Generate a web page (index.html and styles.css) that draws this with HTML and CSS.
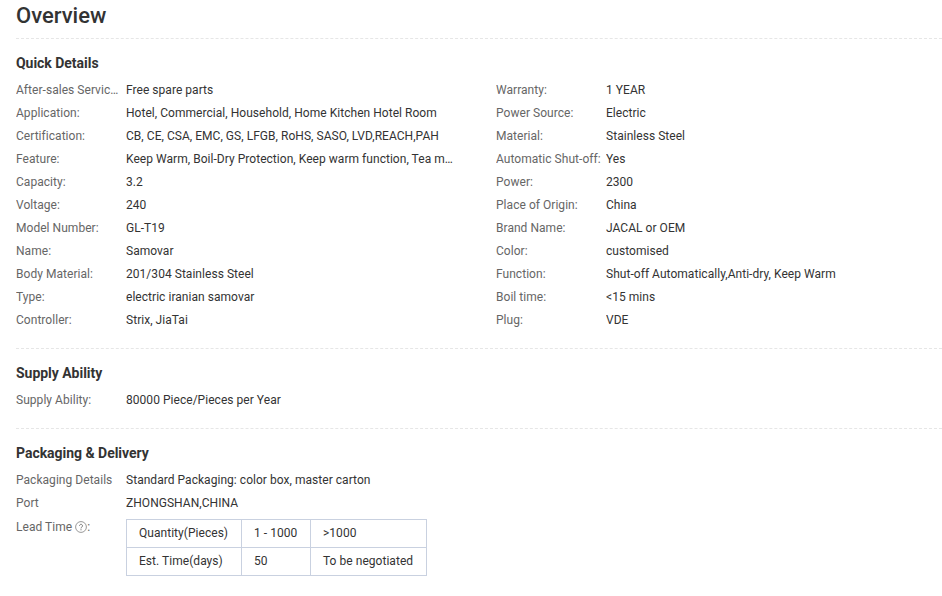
FILE: index.html
```html
<!DOCTYPE html>
<html lang="en">
<head>
<meta charset="utf-8">
<title>Overview</title>
<link rel="stylesheet" href="styles.css">
</head>
<body>
<main class="page">
  <h1 class="title">Overview</h1>
  <section class="section quick">
    <h2 class="heading">Quick Details</h2>
    <div class="attrs">
      <div class="row"><span class="key">After-sales Service Provided:</span><span class="val">Free spare parts</span></div>
      <div class="row"><span class="key">Warranty:</span><span class="val">1 YEAR</span></div>
      <div class="row"><span class="key">Application:</span><span class="val">Hotel, Commercial, Household, Home Kitchen Hotel Room</span></div>
      <div class="row"><span class="key">Power Source:</span><span class="val">Electric</span></div>
      <div class="row"><span class="key">Certification:</span><span class="val">CB, CE, CSA, EMC, GS, LFGB, RoHS, SASO, LVD,REACH,PAH</span></div>
      <div class="row"><span class="key">Material:</span><span class="val">Stainless Steel</span></div>
      <div class="row"><span class="key">Feature:</span><span class="val">Keep Warm, Boil-Dry Protection, Keep warm function, Tea making function</span></div>
      <div class="row"><span class="key">Automatic Shut-off:</span><span class="val">Yes</span></div>
      <div class="row"><span class="key">Capacity:</span><span class="val">3.2</span></div>
      <div class="row"><span class="key">Power:</span><span class="val">2300</span></div>
      <div class="row"><span class="key">Voltage:</span><span class="val">240</span></div>
      <div class="row"><span class="key">Place of Origin:</span><span class="val">China</span></div>
      <div class="row"><span class="key">Model Number:</span><span class="val">GL-T19</span></div>
      <div class="row"><span class="key">Brand Name:</span><span class="val">JACAL or OEM</span></div>
      <div class="row"><span class="key">Name:</span><span class="val">Samovar</span></div>
      <div class="row"><span class="key">Color:</span><span class="val">customised</span></div>
      <div class="row"><span class="key">Body Material:</span><span class="val">201/304 Stainless Steel</span></div>
      <div class="row"><span class="key">Function:</span><span class="val">Shut-off Automatically,Anti-dry, Keep Warm</span></div>
      <div class="row"><span class="key">Type:</span><span class="val">electric iranian samovar</span></div>
      <div class="row"><span class="key">Boil time:</span><span class="val">&lt;15 mins</span></div>
      <div class="row"><span class="key">Controller:</span><span class="val">Strix, JiaTai</span></div>
      <div class="row"><span class="key">Plug:</span><span class="val">VDE</span></div>
    </div>
  </section>
  <section class="section supply">
    <h2 class="heading">Supply Ability</h2>
    <div class="row"><span class="key">Supply Ability:</span><span class="val">80000 Piece/Pieces per Year</span></div>
  </section>
  <section class="section packaging">
    <h2 class="heading">Packaging &amp; Delivery</h2>
    <div class="row"><span class="key">Packaging Details</span><span class="val">Standard Packaging: color box, master carton</span></div>
    <div class="row"><span class="key">Port</span><span class="val">ZHONGSHAN,CHINA</span></div>
    <div class="row lead">
      <span class="key">Lead Time<svg class="help" width="12" height="12" viewBox="0 0 12 12" aria-hidden="true"><circle cx="6" cy="6" r="5.4" fill="none" stroke="#999" stroke-width="1"/><path d="M4.5 4.7a1.5 1.5 0 1 1 2.4 1.3c-.6.4-.9.7-.9 1.4" fill="none" stroke="#777" stroke-width="1"/><path d="M6 8.2v1.1" stroke="#777" stroke-width="1"/></svg>:</span>
      <table class="lead-table">
        <tr><td class="c1">Quantity(Pieces)</td><td class="c2">1 - 1000</td><td class="c3">&gt;1000</td></tr>
        <tr><td class="c1">Est. Time(days)</td><td class="c2">50</td><td class="c3">To be negotiated</td></tr>
      </table>
    </div>
  </section>
</main>
</body>
</html>
```
FILE: styles.css
```css
* { box-sizing: border-box; }
html, body { margin: 0; padding: 0; background: #fff; }
body {
  font-family: Roboto, "Liberation Sans", sans-serif;
  font-size: 12px;
  letter-spacing: 0.04px;
  color: #333;
  overflow: hidden;
}
.page { width: 942px; height: 596px; padding-left: 16px; }
.title {
  margin: 0;
  height: 39px;
  padding-top: 3px;
  font-size: 22px;
  line-height: 26px;
  font-weight: 500;
  letter-spacing: 0;
  color: #333;
  border-bottom: 1px dashed #e6e6e6;
}
.section { border-bottom: 1px dashed #e6e6e6; }
.section:last-child { border-bottom: 0; }
.heading {
  margin: 0 0 6px;
  font-size: 14px;
  line-height: 20px;
  font-weight: 700;
  letter-spacing: -0.03px;
  color: #333;
}
.quick { height: 310px; padding-top: 14px; }
.supply { height: 80px; padding-top: 14px; }
.packaging { padding-top: 14px; }
.attrs { display: grid; grid-template-columns: 480px 1fr; }
.row { display: flex; height: 23px; line-height: 23px; }
.key {
  flex: none;
  width: 110px;
  padding-right: 2px;
  color: #666;
  white-space: nowrap;
  overflow: hidden;
  text-overflow: ellipsis;
}
.val {
  width: 330px;
  white-space: nowrap;
  overflow: hidden;
  text-overflow: ellipsis;
}
.help { vertical-align: -2px; margin-left: 3px; }
.lead { height: auto; }
.lead .key { line-height: 24px; }
.lead-table { border-collapse: collapse; margin-top: 4px; }
.lead-table td {
  height: 28px;
  padding: 0 12px 2px;
  line-height: 14px;
  border: 1px solid #c9d1e0;
  white-space: nowrap;
}
.c1 { width: 115px; }
.c2 { width: 69px; }
.c3 { width: 116px; }
```
